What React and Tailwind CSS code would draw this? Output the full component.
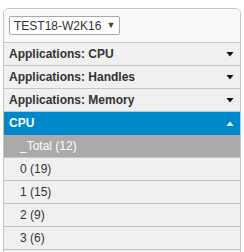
const sections = [
  { label: "Applications: CPU" },
  { label: "Applications: Handles" },
  { label: "Applications: Memory" },
];

const items = ["0 (19)", "1 (15)", "2 (9)", "3 (6)"];

function Caret({ up, color }) {
  return (
    <svg width="8" height="5" viewBox="0 0 8 5" className="shrink-0">
      {up ? (
        <path d="M0.5 5 L4 0.5 L7.5 5 Z" fill={color} />
      ) : (
        <path d="M0.5 0 L7.5 0 L4 4.5 Z" fill={color} />
      )}
    </svg>
  );
}

export default function App() {
  return (
    <div
      className="w-[244px] h-[252px] overflow-hidden bg-white pt-[8px] pl-[3px]"
      style={{ fontFamily: '"Liberation Sans", Arial, sans-serif' }}
    >
      <div className="w-[238px] border border-[#c6c6c6] rounded-t-[5px] overflow-hidden">
        {/* Host picker */}
        <div className="h-[34px] bg-[#f9f9f9] border-b border-[#c6c6c6] pl-[5px] pt-[7px]">
          <div className="w-[111px] h-[19px] bg-white border border-[#a9a9a9] rounded-[2px] flex items-center pl-[4px] gap-[5px] text-[12px] text-[#333]">
            <span>TEST18-W2K16</span>
            <span className="text-[9px] text-[#444]">▼</span>
          </div>
        </div>

        {/* Collapsed sections */}
        {sections.map((s) => (
          <div
            key={s.label}
            className="h-[23px] bg-[#f0f0f0] border-b border-[#c6c6c6] flex items-center justify-between pl-[5px] pr-[6px] text-[12px] font-bold text-[#333]"
          >
            <span>{s.label}</span>
            <Caret color="#111" />
          </div>
        ))}

        {/* Open section */}
        <div className="h-[23px] bg-[#0088cc] border-b border-[#0088cc] flex items-center justify-between pl-[5px] pr-[6px] text-[12px] font-bold text-white">
          <span>CPU</span>
          <Caret up color="#fff" />
        </div>
        <div className="h-[23px] bg-[#aaaaaa] border-b border-[#c6c6c6] flex items-center pl-[16px] text-[12px] text-white">
          _Total (12)
        </div>
        {items.map((it) => (
          <div
            key={it}
            className="h-[23px] bg-[#f0f0f0] border-b border-[#c0c0c0] flex items-center pl-[16px] text-[12px] text-[#333]"
          >
            {it}
          </div>
        ))}
        <div className="h-[23px] bg-[#f0f0f0]" />
      </div>
    </div>
  );
}
